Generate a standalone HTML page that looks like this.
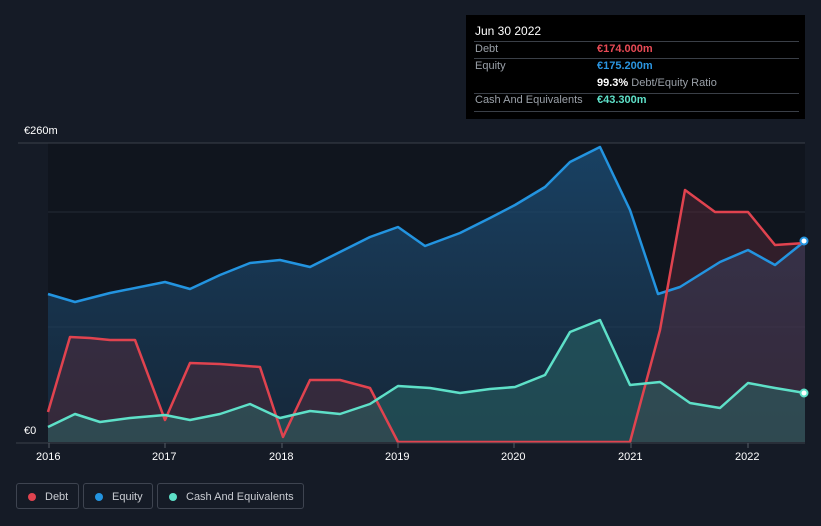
<!DOCTYPE html><html><head><style>
body{margin:0;width:821px;height:526px;background:#151b26;font-family:"Liberation Sans",sans-serif;overflow:hidden;position:relative}
.tt{position:absolute;left:466px;top:15px;width:339px;height:104px;background:#000;color:#fff;font-size:11px}
.tt .r{position:absolute;left:8px;right:6px;border-top:1px solid #3a3f47}
.tt span{position:absolute;white-space:nowrap}
.ax{position:absolute;color:#fff;font-size:11px}
.lg{position:absolute;top:483px;height:26px;border:1px solid #3e4450;border-radius:3px;color:#c9ccd2;font-size:11px;line-height:26px;box-sizing:border-box;white-space:nowrap}
.lg i{position:absolute;left:11px;top:9px;width:8px;height:8px;border-radius:50%}
</style></head><body>
<svg width="821" height="526" style="position:absolute;left:0;top:0">
<defs>
<linearGradient id="ge" x1="0" y1="0" x2="0" y2="1"><stop offset="0" stop-color="#1b4c74" stop-opacity=".8"/><stop offset="1" stop-color="#1b3a56" stop-opacity=".5"/></linearGradient>
</defs>
<rect x="48" y="143" width="757" height="299" fill="#10151e"/>
<line x1="18" y1="143" x2="805" y2="143" stroke="#3a404a"/>
<line x1="48" y1="212" x2="805" y2="212" stroke="#252b35"/>
<line x1="48" y1="327" x2="805" y2="327" stroke="#252b35"/>
<path d="M48,294 L75,302 110,293 165,282 190,289 220,275 250,263 280,260 310,267 340,252 370,237 398,227 425,246 460,233 490,218 515,205 545,187 570,162 600,147 630,210 658,294 680,287 720,262 748,250 775,265 805,241 L805,442 L48,442Z" fill="url(#ge)"/>
<path d="M48,412 L70,337 90,338 110,340 135,340 165,420 190,363 220,364 260,367 283,437 310,380 340,380 370,388 398,442 630,442 660,330 685,190 715,212 748,212 775,245 805,243 L805,442 L48,442Z" fill="#5a2a3a" fill-opacity=".45"/>
<path d="M48,427 L75,414 100,422 130,418 165,415 190,420 220,414 250,404 280,418 310,411 340,414 370,404 398,386 430,388 460,393 490,389 515,387 545,375 570,332 600,320 630,385 660,382 690,403 720,408 748,383 775,388 805,393 L805,442 L48,442Z" fill="#2a6a68" fill-opacity=".5"/>
<polyline fill="none" stroke="#2394e0" stroke-width="2.5" stroke-linejoin="round" points="48,294 75,302 110,293 165,282 190,289 220,275 250,263 280,260 310,267 340,252 370,237 398,227 425,246 460,233 490,218 515,205 545,187 570,162 600,147 630,210 658,294 680,287 720,262 748,250 775,265 805,241"/>
<polyline fill="none" stroke="#e0434f" stroke-width="2.5" stroke-linejoin="round" points="48,412 70,337 90,338 110,340 135,340 165,420 190,363 220,364 260,367 283,437 310,380 340,380 370,388 398,442 630,442 660,330 685,190 715,212 748,212 775,245 805,243"/>
<polyline fill="none" stroke="#5ee0c8" stroke-width="2.5" stroke-linejoin="round" points="48,427 75,414 100,422 130,418 165,415 190,420 220,414 250,404 280,418 310,411 340,414 370,404 398,386 430,388 460,393 490,389 515,387 545,375 570,332 600,320 630,385 660,382 690,403 720,408 748,383 775,388 805,393"/>
<circle cx="804" cy="241" r="3.5" fill="#fff" stroke="#2394e0" stroke-width="2"/>
<circle cx="804" cy="393" r="3.5" fill="#fff" stroke="#5ee0c8" stroke-width="2"/>
<line x1="16" y1="443" x2="805" y2="443" stroke="#3a404a"/>
<g stroke="#555c66"><line x1="49" y1="443" x2="49" y2="448"/><line x1="165" y1="443" x2="165" y2="448"/><line x1="282" y1="443" x2="282" y2="448"/><line x1="398" y1="443" x2="398" y2="448"/><line x1="514" y1="443" x2="514" y2="448"/><line x1="631" y1="443" x2="631" y2="448"/><line x1="748" y1="443" x2="748" y2="448"/></g>
</svg>
<div class="ax" style="left:24px;top:125px">€260m</div>
<div class="ax" style="left:24px;top:425px">€0</div>
<div class="ax" style="left:36px;top:451px">2016</div>
<div class="ax" style="left:152px;top:451px">2017</div>
<div class="ax" style="left:269px;top:451px">2018</div>
<div class="ax" style="left:385px;top:451px">2019</div>
<div class="ax" style="left:501px;top:451px">2020</div>
<div class="ax" style="left:618px;top:451px">2021</div>
<div class="ax" style="left:735px;top:451px">2022</div>
<div class="tt">
<span style="left:9px;top:9px;font-size:12px">Jun 30 2022</span>
<div class="r" style="top:26px"></div>
<span style="left:9px;top:28px;color:#9aa0a8">Debt</span><span style="left:131px;top:28px;color:#e84a55;font-weight:bold">€174.000m</span>
<div class="r" style="top:43px"></div>
<span style="left:9px;top:45px;color:#9aa0a8">Equity</span><span style="left:131px;top:45px;color:#2b95e0;font-weight:bold">€175.200m</span>
<span style="left:131px;top:62px"><b>99.3%</b> <span style="position:static;color:#9aa0a8">Debt/Equity Ratio</span></span>
<div class="r" style="top:78px"></div>
<span style="left:9px;top:79px;color:#9aa0a8">Cash And Equivalents</span><span style="left:131px;top:79px;color:#5ee0c8;font-weight:bold">€43.300m</span>
<div class="r" style="top:96px"></div>
</div>
<div class="lg" style="left:16px;width:63px"><i style="background:#e0434f"></i><span style="position:absolute;left:28px">Debt</span></div>
<div class="lg" style="left:83px;width:70px"><i style="background:#2394e0"></i><span style="position:absolute;left:28px">Equity</span></div>
<div class="lg" style="left:157px;width:147px"><i style="background:#5ee0c8"></i><span style="position:absolute;left:28px">Cash And Equivalents</span></div>
</body></html>
